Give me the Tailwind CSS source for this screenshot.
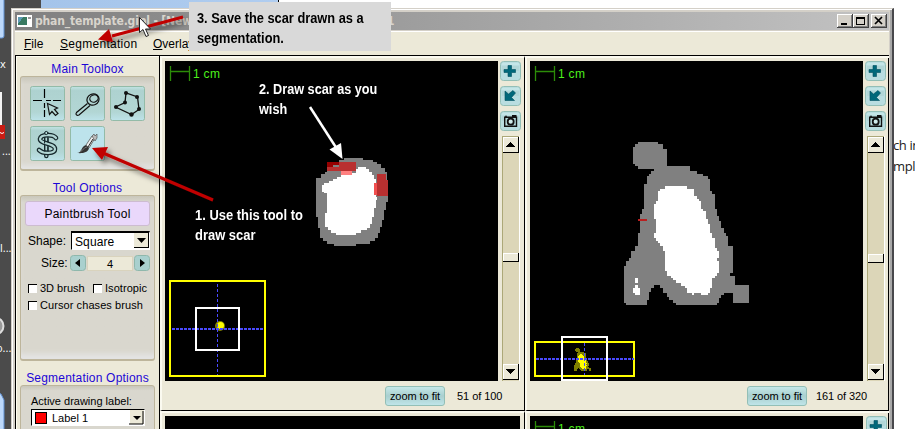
<!DOCTYPE html>
<html lang="en">
<head>
<meta charset="utf-8">
<title>phan_template.gipl</title>
<script src="https://cdn.jsdelivr.net/npm/@tailwindcss/browser@4"></script>
</head>
<body class="w-[915px] h-[429px] overflow-hidden bg-white font-['Liberation_Sans',Arial,sans-serif] text-black">
<svg width="0" height="0" class="absolute">
  <defs>
    <g id="heart" shape-rendering="crispEdges">
      <path class="g" d="M115 36H175V42H189V57H201V108H270V123H291V132H308V138H323V147H330V184H336V192H345V237H351V258H357V273H363V294H372V309H378V318H384V348H399V429H390V438H405V465H447V519H399V489H372V495H363V504H357V519H351V525H228V519H220V510H207V501H201V489H189V474H180V465H162V474H153V486H147V510H141V525H78V519H72V408H78V393H87V384H93V363H105V348H114V309H120V252H126V237H132V162H141V138H147V132H153V123H162V117H114V108H105V102H99V51H105V42H115Z"/>
      <path fill="currentColor" d="M195 168H261V177H282V198H291V207H297V213H303V237H309V243H318V267H324V282H330V309H336V324H345V354H351V363H357V384H351V393H357V429H351V438H345V444H336V474H330V489H324V495H303V489H282V495H276V489H261V474H255V468H243V459H228V450H220V444H213V438H201V423H195V363H189V348H180V339H174V333H168V324H162V309H168V267H162V222H168V213H174V184H180V177H195ZM105 444H114V459H105ZM105 465H114V474H120V495H105V489H99V474H105Z"/>
    </g>
    <g id="plus"><path d="M8 4.500h3.500v4h4v3h-4v4h-3.500v-4h-4v-3h4z" fill="#00687a" stroke="#004f5e" stroke-width=".6"/></g>
    <g id="arrow"><path d="M5 5v9.500h9.500l-3-3 4-4.500-2.500-2.500-4.500 3.500z" fill="#00687a" stroke="#004f5e" stroke-width=".6"/></g>
    <g id="camera"><path d="M4.700 6.200h11.800v9H4.700z" fill="none" stroke="#111" stroke-width="1.400"/><path d="M12 4h4.500v2H12zM5 4.800h2v1H5z" fill="#111"/><circle cx="10.700" cy="10.700" r="3" fill="#cfeaea" stroke="#111" stroke-width="1.800"/></g>
    <filter id="sh" x="-20%" y="-20%" width="140%" height="150%"><feDropShadow dx="3" dy="4" stdDeviation="2.500" flood-color="#000" flood-opacity=".5"/></filter>
  </defs>
</svg>

<main class="relative w-[915px] h-[429px] overflow-hidden">
  <!-- desktop -->
  <div class="flex h-full">
    <div class="w-[41px] bg-[#4b4b4b]"></div>
    <div class="w-[237px] bg-gradient-to-r from-[#a4c4ea] to-[#b0cdf0]"></div>
    <div class="w-px bg-black"></div>
    <div class="grow bg-white"></div>
  </div>
  <svg class="absolute left-0 top-0" width="12" height="429">
    <rect x="-10" y="-5" width="14" height="43" rx="2" fill="#bcd8fa" stroke="#5f8fd0"/>
    <rect x="-5" y="92" width="7" height="36" fill="#f4f4f4"/>
    <rect x="-5" y="125" width="10" height="14" fill="#c91c14"/><path d="M0 132.500l2 1 2-1" stroke="#fff" fill="none"/>
    <circle cx="-5" cy="326" r="8.500" fill="#999" stroke="#ddd" stroke-width="2"/>
    <path d="M-4 392L1 394L4 400V432H-4Z" fill="#bcd8fa" stroke="#5f8fd0"/>
  </svg>
  <div class="absolute left-0 top-0 text-[11px] leading-[12px] text-white font-['Open_Sans',sans-serif]">
    <span class="absolute left-0 top-[58px]">x</span>
    <span class="absolute left-[2px] top-[145px]">...</span>
    <span class="absolute left-0 top-[242px]">l...</span>
    <span class="absolute left-[-4px] top-[342px]">o...</span>
  </div>
  <div class="absolute left-[893px] top-[135px] text-[13px] leading-[21px] whitespace-nowrap font-['Open_Sans',sans-serif] tracking-[-0.4px] text-[#222]">ch in<br>mple</div>

  <!-- application window -->
  <div class="absolute left-[11px] top-[8px] w-[883px] h-[430px] flex flex-col bg-[#d4d0c8] border-l border-t border-[#d4d0c8] border-r-2 border-r-[#48484c] pl-[3px] pr-[3px] pt-[3px] shadow-[inset_1px_1px_0_#fff,inset_-2px_0_0_#a8a8a8]">
    <header class="h-[18px] flex items-center bg-gradient-to-r from-[#808080] to-[#c3c3c3] pl-[2px] pr-[2px]">
      <svg width="15" height="12" shape-rendering="crispEdges"><rect width="15" height="12" fill="#fff"/><rect x="1" y="2" width="9" height="8" fill="#397a62"/><path d="M1 2h5l-2 3-3 3z" fill="#5f9bb4"/><path d="M11 2h3v2h-3z" fill="#999"/></svg>
      <span class="ml-[3px] w-[352px] mt-[1px] text-[12px] leading-[16px] font-bold text-[#d8d4cc] whitespace-pre font-['DejaVu_Sans_Condensed','DejaVu_Sans',sans-serif] tracking-[-0.16px]">phan_template.gipl - [New S</span>
      <span class="mt-[1px] text-[12px] leading-[16px] font-bold text-[#d8d4cc] font-['DejaVu_Sans_Condensed','DejaVu_Sans',sans-serif]">1</span>
      <svg width="50" height="14" class="ml-auto shrink-0" shape-rendering="crispEdges">
        <g id="wb"><rect width="16" height="14" fill="#404040"/><rect width="15" height="13" fill="#fff"/><rect x="1" y="1" width="14" height="12" fill="#808080"/><rect x="1" y="1" width="13" height="11" fill="#d4d0c8"/></g>
        <use href="#wb" x="16"/><use href="#wb" x="34"/>
        <rect x="4" y="9" width="6" height="2"/><path d="M19.500 3.500h8v7h-8z" fill="none" stroke="#000"/><path d="M19 3h9v2h-9z"/><path d="M38 3l7 7M45 3l-7 7" stroke="#000" stroke-width="1.700" shape-rendering="auto"/>
      </svg>
    </header>
    <nav class="h-[25px] mt-px border-t border-white border-b-[#bdb8a4] bg-[#ece9d8] flex items-center text-[12px] pl-[9px] pt-[2px]">
      <span class="w-[36px]"><u>F</u>ile</span>
      <span class="w-[93px] tracking-[0.28px]"><u>S</u>egmentation</span>
      <span><u>O</u>verlay</span>
    </nav>
    <div class="grow min-h-0 flex border-l border-t border-r border-black bg-[#ece9d8]">
      <!-- sidebar -->
      <aside class="w-[143px] shrink-0 border-l border-t border-[#fffef2] pl-[3px] pr-[4px] flex flex-col overflow-hidden *:shrink-0">
        <h2 class="h-[19px] pt-[4px] text-center text-[12px] leading-[16px] text-[#1d06d6] tracking-[0.15px]">Main Toolbox</h2>
        <section class="h-[95px] rounded-[3px] border border-[#bdb59b] border-b-2 bg-gradient-to-b from-[#c9c7bb] via-[#d9d7ce] via-8% to-[#d9d7ce] pl-[9px] pt-[9px] shadow-[inset_0_-6px_5px_-2px_#e4e4e4]">
          <svg width="116" height="76">
            <defs><linearGradient id="tb" x2="0" y2="1"><stop stop-color="#c2e4e4"/><stop offset=".12" stop-color="#aed2d0"/><stop offset=".75" stop-color="#b2d6d4"/><stop offset="1" stop-color="#bde3ea"/></linearGradient></defs>
            <g fill="url(#tb)" stroke="#93bba8"><rect x=".5" y=".5" width="34" height="34" rx="2"/><rect x="40.500" y=".5" width="34" height="34" rx="2"/><rect x="80.500" y=".5" width="34" height="34" rx="2"/><rect x=".5" y="40.500" width="34" height="34" rx="2"/><rect x="40.500" y="40.500" width="34" height="34" rx="2" fill="#bde3ec"/></g>
            <path d="M3 14.500H12M16 14.500h5M23 14.500h8M14.500 3v9M14.500 17v5M14.500 24v7" stroke="#000" stroke-width="1.200"/>
            <path d="M17.500 17.500l2 11 2.500-3 3.500 4 2.500-2-3.500-4 3-1.500z" fill="#b4d6d4" stroke="#111" stroke-width="1.200"/>
            <g fill="none" stroke="#111" stroke-width="1.200"><ellipse cx="63" cy="13.500" rx="6.200" ry="5.500" transform="rotate(-25 63 13.500)"/><ellipse cx="64" cy="12.500" rx="4.300" ry="3.500" transform="rotate(-25 64 12.500)"/><path d="M57.500 17.500l-11 9c-1.500 2 .5 3.500 2.500 2.500l11-9.500"/></g>
            <g stroke="#111" fill="#111"><path d="M85.500 21l9.500-4.500 1-9.500 11.500 4 1.500 12.500-7.500 5z" fill="none" stroke-width="1.300"/><g stroke="none"><circle cx="86" cy="21" r="2"/><circle cx="95" cy="16.500" r="2"/><circle cx="96" cy="7" r="2"/><circle cx="107" cy="11" r="2"/><circle cx="109" cy="23" r="2"/><circle cx="101.500" cy="28.500" r="2.200"/></g></g>
            <g fill="none" stroke-linecap="round">
              <path d="M16.300 48V70" stroke="#16282c" stroke-width="4.500"/><path d="M16.300 48V70" stroke="#b2d6d4" stroke-width="2"/>
              <path d="M26 52c-3-4-15-4-16 1-.5 5 15 4 15 10 0 5-12 5-16 1" stroke="#16282c" stroke-width="4.600"/>
              <path d="M26 52c-3-4-15-4-16 1-.5 5 15 4 15 10 0 5-12 5-16 1" stroke="#b2d6d4" stroke-width="2.200"/>
              <path d="M14.600 52v5M18 52v4M14.600 60v5M18 61v4" stroke="#16282c" stroke-width="1.100"/><circle cx="16.300" cy="47" r="1.600" stroke="#16282c" fill="#b2d6d4"/>
            </g>
            <path d="M47 67c5 0 4-7 9-8l3 3c-1 5-7 5.500-12 5z" fill="#333"/><path d="M50 65.500c4-1 3-4 7-4.500" stroke="#777" fill="none"/><path d="M56 59l6-9 3 2-6 10z" fill="#eee" stroke="#555" stroke-width=".8"/><path d="M62 50l2-2 1 2 2-2v4l-2 3z" fill="#bbb" stroke="#444" stroke-width=".6"/><path d="M58 61l5-8" stroke="#222"/>
          </svg>
        </section>
        <h2 class="h-[24px] pt-[9px] text-center text-[12px] leading-[16px] text-[#1d06d6] tracking-[0.25px]">Tool Options</h2>
        <section class="h-[166px] rounded-[3px] border border-[#bdb59b] border-b-2 bg-gradient-to-b from-[#c9c7bb] via-[#d9d7ce] via-4% to-[#d9d7ce] pl-[4px] pt-[5px] pr-[4px] shadow-[inset_0_-7px_5px_-2px_#e4e4e4]">
          <div class="h-[25px] rounded-[3px] border border-[#cdbcd0] bg-[#ead8fb] text-center text-[12px] leading-[24px] tracking-[0.25px]">Paintbrush Tool</div>
          <div class="flex items-center mt-[5px] h-[19px] text-[12px]">
            <span class="w-[46px] pl-[3px] text-[12px]">Shape:</span>
            <span class="relative grow h-[19px] bg-white border border-white border-t-2 border-t-black border-l-black pl-[3px] leading-[18px] tracking-[0.1px]">Square<svg class="absolute right-0 top-0" width="15" height="15"><path d="M0 0h15v15H0z" fill="#000"/><path d="M0 0h14v14H0z" fill="#ece9d8"/><path d="M3 5h9l-4.500 5z"/></svg></span>
          </div>
          <div class="flex items-center mt-[5px] h-[16px] text-[12px]">
            <span class="w-[45px] pl-[16px]">Size:</span>
            <svg width="16" height="16"><rect x=".5" y=".5" width="15" height="15" rx="3" fill="#a9d0ce" stroke="#8fb8ac"/><path d="M10 4v8L5 8z"/></svg>
            <span class="mx-px w-[46px] h-[15px] bg-[#ece9d8] border border-[#d9d3bd] text-center leading-[14px] text-[11px]">4</span>
            <svg width="16" height="16"><rect x=".5" y=".5" width="15" height="15" rx="3" fill="#a9d0ce" stroke="#8fb8ac"/><path d="M6 4v8l5-4z"/></svg>
          </div>
          <div class="flex items-center mt-[10px] h-[14px] pl-[3px] text-[11px] leading-[14px] whitespace-nowrap">
            <i class="size-[9px] bg-white border-t border-l border-black mr-[3px]"></i><span class="w-[53px]">3D brush</span>
            <i class="size-[9px] bg-white border-t border-l border-black mr-[3px]"></i><span class="tracking-[0.05px]">Isotropic</span>
          </div>
          <div class="flex items-center mt-[3px] h-[14px] pl-[3px] text-[11px] leading-[14px] whitespace-nowrap">
            <i class="size-[9px] bg-white border-t border-l border-black mr-[3px]"></i><span class="tracking-[0.08px]">Cursor chases brush</span>
          </div>
        </section>
        <h2 class="h-[24px] pt-[9px] text-center text-[12px] leading-[16px] text-[#1d06d6] tracking-[0.2px] whitespace-nowrap">Segmentation Options</h2>
        <section class="h-[60px] rounded-[3px] border border-[#bdb59b] bg-gradient-to-b from-[#c9c7bb] via-[#d9d7ce] via-8% to-[#d9d7ce] pl-[10px] pt-[8px]">
          <div class="text-[11px] leading-[15px]">Active drawing label:</div>
          <div class="w-[114px] h-[17px] bg-white border border-white border-t-black border-l-black flex items-center text-[11px] pl-[3px]"><i class="size-[12px] bg-[#f00] border border-black mr-[5px]"></i>Label 1<svg class="ml-auto" width="15" height="15"><path d="M1 0h14v14H1z" fill="#ece9d8"/><path d="M0 14h14V1" fill="none" stroke="#000"/><path d="M4 6h8l-4 4z"/></svg></div>
        </section>
      </aside>
      <!-- slice views -->
      <div class="grow grid grid-cols-[365px_364px] grid-rows-[355px_20px] border-l border-black">
        <section class="border-l-2 border-t-2 border-[#fbfaf0] border-r border-r-black border-b border-b-black pl-[3px] pt-[3px] pr-[2px]">
          <div class="flex">
            <svg width="333" height="320" class="bg-black shrink-0">
              <path d="M5.500 5v15M24.500 5v15M5 10.500h19" stroke="#2c8c08" stroke-width="1.300" fill="none"/>
              <g transform="translate(125 79) scale(.33333)" shape-rendering="crispEdges">
                <path fill="#808080" d="M163 54H218V60H248V66H260V72H272V84H284V96H290V120H294V185H288V210H282V240H276V260H270V280H264V295H254V302H240V311H197V317H133V311H112V303H100V295H90V265H84V232H78V114H92V103H105V97H112V66H146V60H163Z"/>
                <path fill="#fff" d="M205 81H229V87H238V97H247V106H252V118H258V170H261V180H258V205H252V230H246V252H240V263H232V270H214V278H198V285H138V278H124V270H115V262H105V218H111V160H103V157H96V134H103V130H118V122H130V116H142V110H152V104H185V98H198V88H205Z"/>
                <path fill="#b93030" d="M146 66H198V93H112V80H146ZM261 102H288V120H294V168H261Z"/><path fill="#960000" d="M112 66H146V74H130V80H112Z"/>
                <path fill="#ff8080" d="M152 93H185V106H152Z"/><path fill="#f05050" d="M252 130H261V165H252Z"/>
              </g>
              <rect x="5" y="220" width="95" height="95" fill="none" stroke="#ff0" stroke-width="2"/>
              <circle cx="55" cy="265" r="5" fill="#808000"/><circle cx="55.500" cy="264.500" r="3.500" fill="#ff0"/>
              <path d="M52.500 223V314" stroke="#4a4aff" stroke-dasharray="3 2"/><path d="M7 268H99" stroke="#4a4aff" stroke-width="2" stroke-dasharray="3 1"/>
              <rect x="31" y="247" width="43" height="42" fill="none" stroke="#fff" stroke-width="2"/>
              <text x="28" y="17" fill="#4cf01c" font-size="12" letter-spacing=".3">1 cm</text>
            </svg>
            <div class="pl-[2px] flex flex-col gap-[5px] w-[25px]">
              <svg width="21" height="20"><g id="sb"><rect x=".5" y=".5" width="20" height="19" rx="3" fill="#b9dde0" stroke="#93bfb6"/><path d="M2 3h17" stroke="#cfeeee"/><path d="M2 7.500h17" stroke="#a6cccb" stroke-width="5" opacity=".4"/></g><use href="#plus"/></svg>
              <svg width="21" height="20"><use href="#sb"/><use href="#arrow"/></svg>
              <svg width="21" height="20"><use href="#sb"/><use href="#camera"/></svg>
              <svg width="18" height="245" class="ml-[2px]" shape-rendering="crispEdges"><rect width="17" height="245" fill="#dcd6b8"/><path d="M.5 0v245M0 .5h17" stroke="#aca878"/><path d="M17.500 0v245" stroke="#fff"/>
                <g id="bx"><rect x="1" y="1" width="16" height="16"/><rect x="1" y="1" width="15" height="15" fill="#fff"/><rect x="2" y="2" width="14" height="14" fill="#ece9d8"/></g><use href="#bx" y="227"/>
                <path d="M4 11h9v-1h-1v-1h-1v-1h-1v-1h-1v-1h-1v1h-1v1h-1v1h-1v1h-1zM4 233h9v1h-1v1h-1v1h-1v1h-1v1h-1v-1h-1v-1h-1v-1h-1v-1h-1z"/>
                <rect x="1" y="117" width="16" height="9"/><rect x="1" y="117" width="15" height="8" fill="#fff"/><rect x="2" y="118" width="14" height="7" fill="#ece9d8"/></svg>
            </div>
          </div>
          <div class="flex items-center h-[20px] mt-[5px] pl-[220px] text-[11px] whitespace-nowrap"><span class="w-[60px] h-[20px] rounded-[3px] border border-[#93bfb6] bg-gradient-to-b from-[#c5e8e8] via-[#a9cfcf] to-[#bfe5e8] text-center leading-[18px] tracking-[-0.05px]">zoom to fit</span><span class="ml-[12px] tracking-[-0.05px]">51 of 100</span></div>
        </section>
        <section class="border-l-2 border-t-2 border-[#fbfaf0] border-b border-b-black pl-[3px] pt-[3px]">
          <div class="flex">
            <svg width="333" height="320" class="bg-black shrink-0">
              <path d="M5.500 5v15M24.500 5v15M5 10.500h19" stroke="#2c8c08" stroke-width="1.300" fill="none"/>
              <g transform="translate(70 69) scale(.33333)"><use href="#heart" class="text-white" fill="#808080"/><rect x="114" y="267" width="27" height="6" fill="#b92020"/></g>
              <rect x="5" y="281" width="99" height="34" fill="none" stroke="#ff0" stroke-width="2"/>
              <g transform="translate(41 285.500) scale(.044 .0465)"><use href="#heart" class="text-[#ff0]" fill="#808000"/></g>
              <path d="M54.500 282V314" stroke="#4a4aff" stroke-dasharray="3 2"/><path d="M6 298H104" stroke="#4a4aff" stroke-width="2" stroke-dasharray="3 1"/>
              <rect x="32" y="276" width="45" height="43" fill="none" stroke="#fff" stroke-width="2"/>
              <text x="28" y="17" fill="#4cf01c" font-size="12" letter-spacing=".3">1 cm</text>
            </svg>
            <div class="pl-[2px] flex flex-col gap-[5px] w-[25px]">
              <svg width="21" height="20"><use href="#sb"/><use href="#plus"/></svg>
              <svg width="21" height="20"><use href="#sb"/><use href="#arrow"/></svg>
              <svg width="21" height="20"><use href="#sb"/><use href="#camera"/></svg>
              <svg width="18" height="245" class="ml-[2px]" shape-rendering="crispEdges"><rect width="17" height="245" fill="#dcd6b8"/><path d="M.5 0v245M0 .5h17" stroke="#aca878"/><path d="M17.500 0v245" stroke="#fff"/>
                <use href="#bx"/><use href="#bx" y="227"/>
                <path d="M4 11h9v-1h-1v-1h-1v-1h-1v-1h-1v-1h-1v1h-1v1h-1v1h-1v1h-1zM4 233h9v1h-1v1h-1v1h-1v1h-1v1h-1v-1h-1v-1h-1v-1h-1v-1h-1z"/>
                <rect x="1" y="118" width="16" height="9"/><rect x="1" y="118" width="15" height="8" fill="#fff"/><rect x="2" y="119" width="14" height="7" fill="#ece9d8"/></svg>
            </div>
          </div>
          <div class="flex items-center h-[20px] mt-[5px] pl-[217px] text-[11px] whitespace-nowrap"><span class="w-[60px] h-[20px] rounded-[3px] border border-[#93bfb6] bg-gradient-to-b from-[#c5e8e8] via-[#a9cfcf] to-[#bfe5e8] text-center leading-[18px] tracking-[-0.05px]">zoom to fit</span><span class="ml-[9px] tracking-[-0.1px]">161 of 320</span></div>
        </section>
        <section class="border-l-2 border-t-2 border-[#fbfaf0] border-r border-r-black pl-[3px] pt-[3px]"><div class="w-[355px] h-[15px] bg-black"></div></section>
        <section class="border-l-2 border-t-2 border-[#fbfaf0] pl-[3px] pt-[3px] flex">
          <svg width="333" height="15" class="bg-black shrink-0"><path d="M5.500 5v15M24.500 5v15M5 10.500h19" stroke="#2c8c08" stroke-width="1.300" fill="none"/><text x="28" y="17" fill="#4cf01c" font-size="12" letter-spacing=".3">1 cm</text></svg>
          <svg width="21" height="15" class="ml-[3px] shrink-0"><use href="#sb"/><use href="#plus"/></svg>
        </section>
      </div>
    </div>
  </div>

  <!-- callouts -->
  <svg class="absolute left-0 top-0" width="915" height="429">
    <g filter="url(#sh)"><path d="M183 17L112 36" stroke="#c00000" stroke-width="3"/><path d="M98 39.500L109 29l4 13z" fill="#c00000"/>
    <path d="M213 200L103 153" stroke="#c00000" stroke-width="3"/><path d="M92 148l16-1-6 13z" fill="#c00000"/></g>
    <path d="M310 107L337 149" stroke="#fff" stroke-width="2.500"/><path d="M342.500 159l-13-9.500 11.500-6.500z" fill="#fff"/>
    <path d="M139.500 17.500v15l3.500-3 3 7 2.500-1-3-6.500h5z" fill="#fff" stroke="#222"/>
  </svg>
  <div class="absolute left-[189px] top-[2px] w-[202px] h-[49px] bg-[#d9d9d9] pl-[8px] pt-[6px] text-[14px] leading-[20px] font-bold"><p class="origin-left scale-x-[0.915] whitespace-nowrap">3. Save the scar drawn as a<br>segmentation.</p></div>
  <p class="absolute left-[259px] top-[79px] text-[14px] leading-[20px] font-bold text-white origin-left scale-x-[0.905] whitespace-nowrap">2. Draw scar as you<br>wish</p>
  <p class="absolute left-[195px] top-[205px] text-[14px] leading-[20px] font-bold text-white origin-left scale-x-[0.925] whitespace-nowrap">1. Use this tool to<br>draw scar</p>
</main>
</body>
</html>
